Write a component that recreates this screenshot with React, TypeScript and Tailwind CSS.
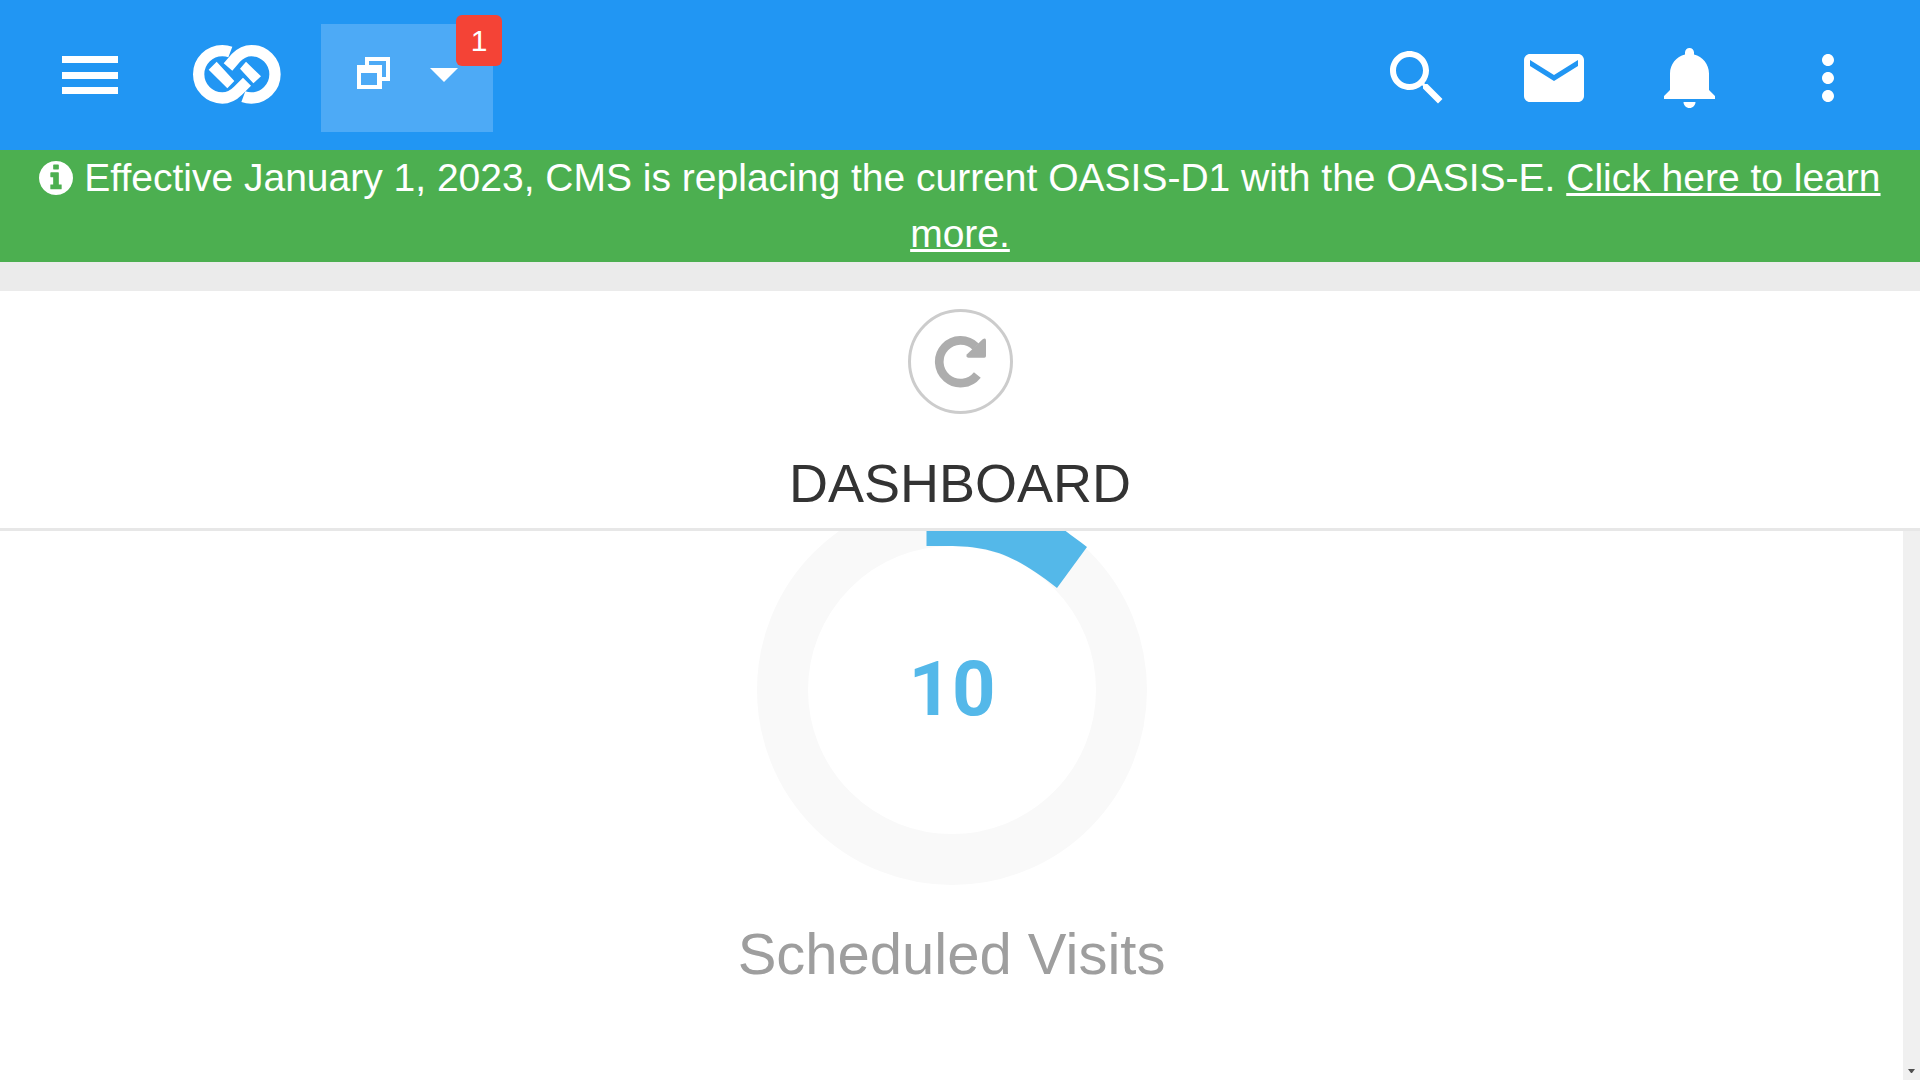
import React from 'react'

const toolbarItems = [
    { label: 'Search', path: 'M15.5 14h-.79l-.28-.27C15.41 12.59 16 11.11 16 9.5 16 5.91 13.09 3 9.5 3S3 5.91 3 9.5 5.91 16 9.5 16c1.61 0 3.09-.59 4.23-1.57l.27.28v.79l5 4.99L20.49 19l-4.99-5zm-6 0C7.01 14 5 11.99 5 9.5S7.01 5 9.5 5 14 7.01 14 9.5 11.99 14 9.5 14z' },
    { label: 'Messages', path: 'M20 4H4c-1.1 0-1.99.9-1.99 2L2 18c0 1.1.9 2 2 2h16c1.1 0 2-.9 2-2V6c0-1.1-.9-2-2-2zm0 4l-8 5-8-5V6l8 5 8-5v2z' },
    { label: 'Notifications', path: 'M11.5 22c1.1 0 2-.9 2-2h-4c0 1.1.9 2 2 2zm6.5-6v-5.5c0-3.07-2.13-5.64-5-6.32V3.5c0-.83-.67-1.5-1.5-1.5S10 2.67 10 3.5v.68c-2.87.68-5 3.25-5 6.32V16l-2 2v1h17v-1l-2-2z' },
    { label: 'More options', path: 'M12 8c1.1 0 2-.9 2-2s-.9-2-2-2-2 .9-2 2 .9 2 2 2zm0 2c-1.1 0-2 .9-2 2s.9 2 2 2 2-.9 2-2-.9-2-2-2zm0 6c-1.1 0-2 .9-2 2s.9 2 2 2 2-.9 2-2-.9-2-2-2z' },
];

const Logo = () => (
    <svg viewBox="576 131 270 189" className="h-[63px] w-[90px]" fill="none" aria-hidden="true">
        <g stroke="#fff" strokeWidth="34">
            <path d="M691 155 C683 152 675 151 667 151 A71 71 0 0 0 667 293 C690 293 702 283 714 271 L741 244" />
            <path d="M730 289 C738 292 746 293 754 293 A71 71 0 0 0 754 151 C731 151 719 161 707 173 L684 200" />
        </g>
        <path fill="#fff" d="M626 208 L650 184 L703 242 L682 264 Z M720 205 L738 184 L783 228 L760 249 Z" />
    </svg>
)

const InfoIcon = () => (
    <svg viewBox="0 128 1536 1536" className="inline size-[34px] align-[-4px]" fill="currentColor" aria-hidden="true">
        <path d="M1024 1376v-160q0-14-9-23t-23-9h-96v-512q0-14-9-23t-23-9h-320q-14 0-23 9t-9 23v160q0 14 9 23t23 9h96v320h-96q-14 0-23 9t-9 23v160q0 14 9 23t23 9h448q14 0 23-9t9-23zm-128-896v-160q0-14-9-23t-23-9h-192q-14 0-23 9t-9 23v160q0 14 9 23t23 9h192q14 0 23-9t9-23zm640 416q0 209-103 385.5t-279.5 279.5-385.5 103-385.5-103-279.5-279.5-103-385.5 103-385.5 279.5-279.5 385.5-103 385.5 103 279.5 279.5 103 385.5z" />
    </svg>
)

const RefreshIcon = () => (
    <svg viewBox="162 139 156 156" className="size-[52px]" aria-hidden="true">
        <path d="M287 171 A64 64 0 1 0 292 256" fill="none" stroke="currentColor" strokeWidth="26" />
        <path d="M308 149 Q318 143 318 153 V199 Q318 204 313 204 H265 Q256 203 261 194 Z" fill="currentColor" />
    </svg>
)

const Header = () => (
    <header className="flex h-[150px] items-center justify-between bg-[#2196f3] pr-14 pl-[62px] text-white">
        <div className="flex items-center">
            <button type="button" aria-label="Menu">
                <svg viewBox="0 0 56 38" className="h-[38px] w-14" fill="currentColor" aria-hidden="true">
                    <path d="M0 0h56v7H0z M0 16h56v7H0z M0 31h56v7H0z" />
                </svg>
            </button>
            <a href="#" aria-label="Home" className="ml-[74px]">
                <Logo />
            </a>
            <button type="button" aria-label="Open windows" className="relative mt-[6px] ml-[39px] flex h-[108px] w-[172px] items-start justify-between bg-[#4daaf6] pt-[33px] pr-[35px] pl-9">
                <svg viewBox="0 0 33 32" className="h-8 w-[33px]" fill="currentColor" aria-hidden="true">
                    <path fillRule="evenodd" d="M8 0h25v24h-8v-4h4V4H12v4H8z M0 8h25v24H0z M4 16v12h16V16z" />
                </svg>
                <svg viewBox="0 0 28 14" className="mt-[11px] h-[14px] w-7" fill="currentColor" aria-hidden="true">
                    <path d="M0 0h28L14 14z" />
                </svg>
                <span className="absolute -top-[9px] -right-[9px] flex h-[51px] w-[46px] items-center justify-center rounded-md bg-[#f44336] text-[30px]">
                    1
                </span>
            </button>
        </div>
        <nav className="mt-[6px] flex gap-[65px]">
            {toolbarItems.map((item) => (
                <button key={item.label} type="button" aria-label={item.label}>
                    <svg viewBox="0 0 24 24" className="size-[72px]" fill="currentColor" aria-hidden="true">
                        <path d={item.path} />
                    </svg>
                </button>
            ))}
        </nav>
    </header>
)

const VisitsChart = () => (
    <svg viewBox="0 0 390 390" className="size-[390px] font-[Roboto,sans-serif]" role="img" aria-label="10 scheduled visits">
        <circle cx="195" cy="195" r="169.5" fill="none" stroke="#f9f9f9" strokeWidth="51" />
        <path fill="#54b8e9" d="M169.5 51 V0 H250 C275 10 290 22 330 52 L300 93 C252 55 228 51 185 51 Z" />
        <text x="195" y="220" textAnchor="middle" fill="#54b8e9" fontSize="76" fontWeight="700">10</text>
    </svg>
)

const App = () => {
    return (
        <div className="flex h-screen flex-col bg-white font-['Liberation_Sans',Arial,sans-serif]">
            <Header />
            <div className="bg-[#4caf50] px-6 text-center text-[39px] leading-[56px] text-white">
                <InfoIcon />{' '}
                Effective January 1, 2023, CMS is replacing the current OASIS-D1 with the OASIS-E.{' '}
                <a href="#" className="underline decoration-3">Click here to learn more.</a>
            </div>
            <div className="h-[29px] shrink-0 bg-[#ebebeb]" />
            <div className="flex flex-col items-center border-b-3 border-[#e7e7e7] pt-[18px] pb-[14px]">
                <button type="button" aria-label="Refresh" className="flex size-[105px] items-center justify-center rounded-full border-3 border-[#ccc] text-[#adadad]">
                    <RefreshIcon />
                </button>
                <h1 className="mt-[38px] text-[54px] leading-[62px] text-[#333]">DASHBOARD</h1>
            </div>
            <div className="flex min-h-0 flex-1">
                <main className="flex flex-1 flex-col items-center overflow-hidden">
                    <div className="-mt-9 flex shrink-0 flex-col items-center">
                        <VisitsChart />
                        <h2 className="mt-9 text-[58px] leading-[66px] text-[#9e9e9e]">Scheduled Visits</h2>
                    </div>
                </main>
                <div className="flex w-[17px] shrink-0 items-end justify-center bg-[#f0f0f0] pb-[7px]">
                    <svg viewBox="0 0 7 4" className="h-1 w-[7px]" fill="#505050" aria-hidden="true">
                        <path d="M0 0h7L4 4H3z" />
                    </svg>
                </div>
            </div>
        </div>
    )
}

export default App
